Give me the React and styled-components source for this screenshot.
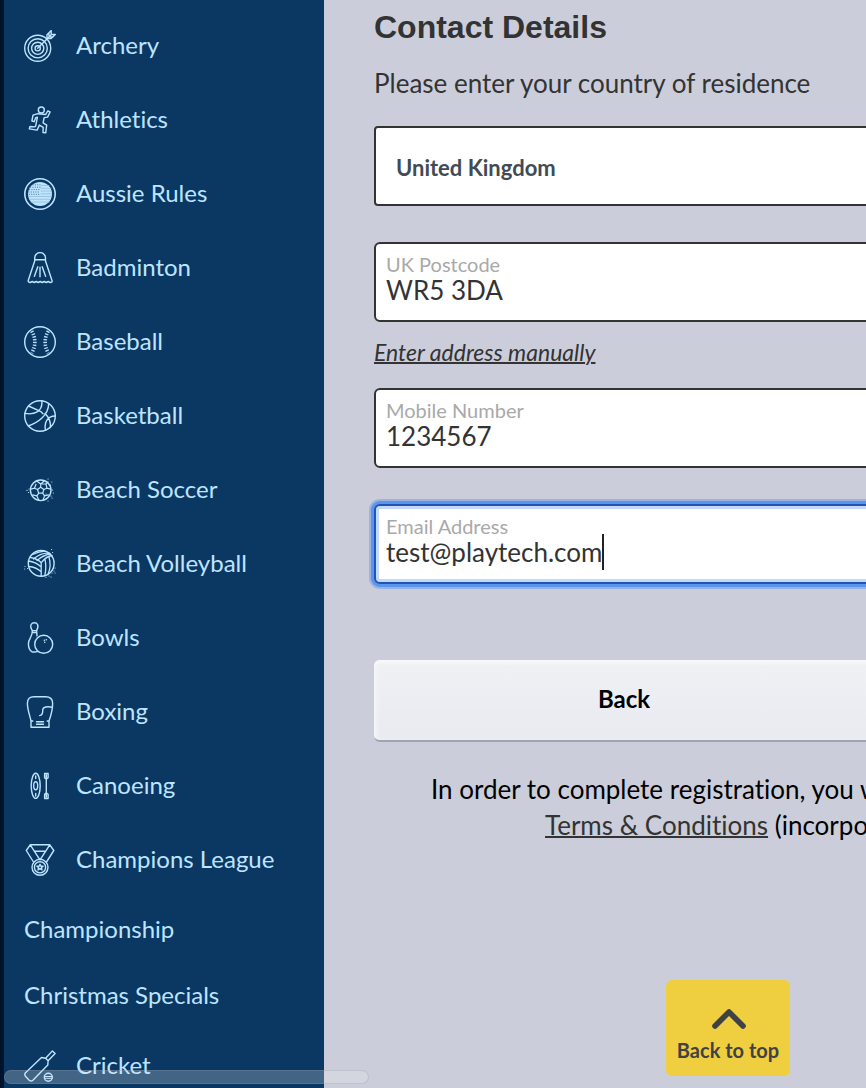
import React from "react";
import styled, { createGlobalStyle, css } from "styled-components";

const GlobalStyle = createGlobalStyle`
  *, *::before, *::after { box-sizing: border-box; }
  body {
    margin: 0;
    background: #cbceda;
    color: #333;
    font-family: Lato, "Liberation Sans", sans-serif;
    font-variant-ligatures: none;
  }
`;

const Page = styled.div`
  display: flex;
  height: 100vh;
  overflow: hidden;
`;

const Sidebar = styled.nav`
  flex: 0 0 324px;
  overflow: hidden;
  border-left: 4px solid #00132d;
  background: #0a3863;
`;

const SportList = styled.ul`
  margin: 0;
  padding: 9px 0 0;
  list-style: none;
`;

const SportLink = styled.a`
  display: flex;
  align-items: center;
  gap: 20px;
  height: ${(p) => (p.$compact ? 66 : 74)}px;
  padding: 0 20px;
  color: #bfe4ff;
  font-size: 24px;
  line-height: 32px;
  text-decoration: none;
  white-space: nowrap;
`;

const SportName = styled.span`
  padding-bottom: 2px;
`;

const IconSvg = styled.svg`
  flex: none;
  width: 32px;
  height: 32px;
  fill: none;
  stroke: currentColor;
  stroke-width: 1.4;
  stroke-linecap: round;
  stroke-linejoin: round;
`;

const Main = styled.main`
  position: relative;
  flex: 1;
  min-width: 0;
  overflow: hidden;
  padding: 8px 0 0 50px;
`;

const Form = styled.form`
  display: flex;
  flex-direction: column;
  min-width: 1008px;
`;

const Heading = styled.h1`
  margin: 0;
  font: bold 32px/38px "Liberation Sans", Arial, sans-serif;
`;

const Intro = styled.label`
  margin: 20px 0 26px;
  font-size: 26px;
  line-height: 34px;
`;

const box = css`
  height: 80px;
  border: 2px solid #333;
  background: #fff;
`;

const CountrySelect = styled.select`
  ${box}
  width: 100%;
  margin-bottom: 36px;
  padding: 4px 20px 0;
  border-radius: 4px;
  appearance: none;
  color: #414b53;
  font: bold 22px/32px Lato, sans-serif;
`;

const Field = styled.div`
  ${box}
  display: flex;
  flex-direction: column;
  padding: 8px 10px 0;
  border-radius: 6px;
  ${(p) =>
    p.$focused &&
    css`
      border-color: #1f56b3;
      box-shadow: 0 0 0 3px #5b93ee, 0 0 0 5px #9bb3e0, inset 0 0 0 3px #c5dafb;
    `}
`;

const FieldLabel = styled.label`
  color: #a9a9a9;
  font-size: 20px;
  line-height: 24px;
`;

const ValueRow = styled.div`
  display: flex;
  align-items: center;
  height: 28px;
`;

const TextInput = styled.input`
  field-sizing: content;
  padding: 0;
  border: 0;
  outline: 0;
  background: none;
  color: #333;
  caret-color: transparent;
  font: 26px/28px Lato, sans-serif;
`;

const Caret = styled.span`
  flex: none;
  width: 2px;
  height: 36px;
  background: #222;
`;

const ManualLink = styled.a`
  align-self: flex-start;
  margin: 15px 0 21px;
  color: #333;
  font-size: 23px;
  font-style: italic;
  line-height: 30px;
  text-decoration-thickness: 2px;
`;

const Gap = styled.div`
  height: 36px;
`;

const Actions = styled.div`
  display: grid;
  grid-template-columns: 1fr 1fr;
  gap: 8px;
  margin: 76px 0 29px;
`;

const BackButton = styled.button`
  height: 82px;
  padding: 0 0 2px;
  border: 0;
  border-bottom: 2px solid #a0a4b0;
  border-radius: 6px;
  background: linear-gradient(#f0f1f5, #e9eaf0);
  box-shadow: inset 0 3px 3px #f8f9fb, inset 3px 0 4px #f3f4f7;
  color: #000;
  font: bold 24px/32px Lato, sans-serif;
`;

const Terms = styled.p`
  margin: 0;
  color: #000;
  font-size: 26px;
  line-height: 36px;
  white-space: nowrap;
`;

const TermsLine = styled.span`
  display: block;
  padding-left: ${(p) => p.$indent}px;
`;

const TermsLink = styled.a`
  color: #333;
  text-decoration-thickness: 2px;
`;

const TopButton = styled.button`
  position: fixed;
  right: 76px;
  bottom: 12px;
  display: flex;
  flex-direction: column;
  align-items: center;
  gap: 8px;
  width: 124px;
  height: 96px;
  padding: 28px 0 0;
  border: 0;
  border-radius: 6px;
  background: #efce3f;
  color: #3f4244;
  font: bold 20px/24px Lato, sans-serif;
  white-space: nowrap;
`;

const Chevron = styled.svg`
  width: 36px;
  height: 22px;
  fill: none;
  stroke: currentColor;
  stroke-width: 5.6;
  stroke-linecap: round;
  stroke-linejoin: round;
`;

const ScrollThumb = styled.div`
  position: fixed;
  bottom: 4px;
  left: 4px;
  width: 365px;
  height: 14px;
  border-radius: 7px;
  background: rgba(236, 236, 238, 0.25);
  box-shadow: inset 0 0 0 1px rgba(140, 150, 165, 0.3);
`;

const icons = {
  archery: (
    <>
      <circle cx="13.7" cy="18.3" r="13" />
      <circle cx="13.7" cy="18.3" r="9.6" />
      <circle cx="13.7" cy="18.3" r="6.1" />
      <circle cx="13.7" cy="18.3" r="2.6" />
      <path d="M13.7 18.3 27.5 4.5M23 8.6V4.7L27.2.6V4.5h4.1l-4.2 4.1ZM25 3v4h4" />
    </>
  ),
  athletics: (
    <>
      <circle cx="17.3" cy="6" r="3" />
      <path d="M14 9.7 9 11.2 7.9 17l2.2.7 1.7-4.1 1.6-.3-1.7 8.5-.8 1.1-4.9-.4-.7 2.4 7.8 1.2 2.3-5 3.8 2.2-.2 5.3 2.7.2 1-7.7-3.6-2.3 1-5.2 3.5-.5 2.5-5.2-2.3-1-2.1 3.6Z" />
    </>
  ),
  aussie: (
    <>
      <circle cx="16" cy="16" r="15.2" strokeWidth="1.6" />
      <circle cx="16" cy="16" r="12" fill="currentColor" stroke="none" />
      <path d="M17 7.5h8M17 10.300h10M17 13h10.500M17 15.800h10.500M4.500 18.500h23M5.500 21.300h21M7 24h18" stroke="#94bbdc" strokeWidth=".8" />
      <path d="M9 6.800h7M6.500 9.200H16M5.500 11.600H16M4.800 14H16M5.300 16.300H16" stroke="#3f6c95" strokeWidth=".9" strokeDasharray=".3 2" />
    </>
  ),
  badminton: (
    <path d="M10.700 9V6a5.400 5.400 0 0 1 10.800 0v3M10.700 7.700h10.800M10.700 9 4.200 28.500q0 2 2 2l2-1 2 1 2-1 2 1 2-1 2 1 2-1 2 1 2-1 2 1q2.400 0 1.800-2L21.500 9M16 15.300v9.500M13.800 14.800l-3.400 9.500M18.200 14.800l3.400 9.500" />
  ),
  baseball: (
    <>
      <circle cx="16" cy="16" r="15.300" />
      <path d="M7.700 5.200Q14 16 7.700 27M24.300 5.200Q18 16 24.300 27" strokeWidth="3.600" strokeLinecap="butt" strokeDasharray="1.300 1.500" />
    </>
  ),
  basketball: (
    <>
      <circle cx="16" cy="16" r="15.300" />
      <path d="m4.500 6 12 5.300 2.500 2.500M.8 13.400C10 15 19 12 17.800.8M4.300 26C13 23 24.500 16 24.700 3.500M21 13.500c4 4 6 9 5.300 14M21.500 30C20 23 23 16 31.200 16" />
    </>
  ),
  beachSoccer: (
    <>
      <circle cx="16.700" cy="16.300" r="10.300" />
      <path d="m16.700 13.200 3.200 2.300-1.200 3.700h-4l-1.200-3.700ZM16.700 13.200V10l-4-3M16.700 10l3.500-3M13.500 15.500l-3-1.300-3.600 1M10.500 14.200l1.500-4M14.700 19.200l-1.800 2.700-4.200-1M12.900 21.900l1.800 4M18.700 19.200l1.800 2.700-1.300 3.800M20.500 21.900l4-1M19.900 15.500l3-1.300 3.700 1M22.900 14.200 22 10l2-2M22 10h-4" strokeWidth="1.200" />
      <path d="M3 16.400h.1M5 15h.1M4.500 18.500h.1M24 5h.1M27.800 8h.1M26.500 11h.1M28.500 16h.1M29.300 19h.1M27 22h.1M24 27h.1M22 20h.1M28 24h.1" strokeWidth="1.100" />
    </>
  ),
  volleyball: (
    <>
      <circle cx="17.200" cy="15.400" r="12.900" />
      <path d="M6.500 9.500c4 .5 7.500 2 10.700 5.200C20 11 23.500 8.200 28 7.500M9.500 11C14 7 18.500 4.500 25.500 5.200M13 12.500C17 9 21 6.500 26.500 6M8.500 6.500C12 5 15.500 3.500 20.500 3M17.200 14.700v13.500M21 11.300c1.200 5.500 1 11-.2 16.300M25 9c1.600 5.500 1.400 11.500-.8 16.500M4.500 13c5 .6 8.900 2.500 12.700 6M5 18.500c4.500.3 8.500 2 12.200 5.200" strokeWidth="1.300" />
      <path d="M1 18.500h.1M.7 21h.1M3.500 20.500h.1M27.500 1.500h.1M28.500 4.500h.1M31 20h.1M30 23h.1M28 25h.1M25 28h.1M22 29.300h.1M27 29h.1M31 25h.1" strokeWidth="1.100" />
    </>
  ),
  bowls: (
    <>
      <path d="M8.300 8.600C4.800 2.800 8 .7 10.400.7s5.300 2.100 2.200 7.900l.4 5.300M8.300 8.600c.4 7-4 7.500-3.900 13.200.1 4.200 1.600 7 3.400 7.900 2 .5 4.300.3 5.600-.1M8.300 8.600h4.300M8.200 10.500h4.600" />
      <circle cx="19.700" cy="22.300" r="9" />
      <path d="M20.300 18.300h.1M22.300 17.700h.1M20.700 20.300h.1" strokeWidth="1.500" />
    </>
  ),
  boxing: (
    <path d="M7 25v6.200h18V25M7 25C6 20 3.500 14 3.400 7.500 3.300 2.500 6 .8 10 .8h11.500c4.300 0 7 2.200 7.100 6.200.2 6-1.800 13-3.600 18M7 25h1.800M23.200 25H25M28.300 11.200c-4.500-.8-9.500-.7-9.500 2.600 0 4-.5 5.800-3.200 5.800M12.500 25.800h7M12.500 28.300h7" />
  ),
  canoeing: (
    <>
      <ellipse cx="11.700" cy="15.800" rx="4.500" ry="12.600" />
      <ellipse cx="11.700" cy="15.800" rx="2" ry="4" />
      <path d="M11.700 6v2.500M11.700 23.500V26M22.300 9v13.700M20.600 3.500h3.500v4.300l-1.800 1.500-1.700-1.500ZM20.600 28.500h3.500v-4.300l-1.800-1.500-1.700 1.500ZM22.300 5v3M22.300 24v3" />
    </>
  ),
  champions: (
    <>
      <path d="M6.200.8h19.600M6.200.8 2.300 6.500 9.500 18M6.200.8 16 15.800 25.800.8l4 5.700L22.500 18M10.500 7.300h11" />
      <circle cx="16" cy="23.300" r="8" />
      <circle cx="16" cy="23.300" r="5.600" />
      <path d="m16 20.300.9 2h2.200l-1.700 1.400.6 2.200-2-1.200-2 1.200.6-2.200-1.700-1.400h2.200Z" />
    </>
  ),
  cricket: (
    <>
      <path d="M17.500 7.500 1.500 22.800Q.3 24.300 1.200 26l4 4.200q2 1.600 3.700.1L23.800 15l.3-4.200-2.500-2.500ZM21.600 8.300l6.800-7.400 2.700 2.600-7 7.300" />
      <circle cx="24.300" cy="27.300" r="4" />
      <path d="M20.500 26.500h7.600M20.700 28.300h7.200" strokeWidth="1" />
    </>
  ),
};

const sports = [
  ["Archery", "archery"],
  ["Athletics", "athletics"],
  ["Aussie Rules", "aussie"],
  ["Badminton", "badminton"],
  ["Baseball", "baseball"],
  ["Basketball", "basketball"],
  ["Beach Soccer", "beachSoccer"],
  ["Beach Volleyball", "volleyball"],
  ["Bowls", "bowls"],
  ["Boxing", "boxing"],
  ["Canoeing", "canoeing"],
  ["Champions League", "champions"],
  ["Championship"],
  ["Christmas Specials"],
  ["Cricket", "cricket"],
];

function LabelledField({ id, label, value, type = "text", focused = false }) {
  return (
    <Field $focused={focused}>
      <FieldLabel htmlFor={id}>{label}</FieldLabel>
      <ValueRow>
        <TextInput id={id} type={type} defaultValue={value} />
        {focused && <Caret />}
      </ValueRow>
    </Field>
  );
}

export default function App() {
  return (
    <>
      <GlobalStyle />
      <Page>
        <Sidebar>
          <SportList>
            {sports.map(([name, icon]) => (
              <li key={name}>
                <SportLink href="#" $compact={!icon}>
                  {icon && (
                    <IconSvg viewBox="0 0 32 32" aria-hidden="true">
                      {icons[icon]}
                    </IconSvg>
                  )}
                  <SportName>{name}</SportName>
                </SportLink>
              </li>
            ))}
          </SportList>
        </Sidebar>
        <Main>
          <Form>
            <Heading>Contact Details</Heading>
            <Intro htmlFor="country">Please enter your country of residence</Intro>
            <CountrySelect id="country" defaultValue="uk">
              <option value="uk">United Kingdom</option>
            </CountrySelect>
            <LabelledField id="postcode" label="UK Postcode" value="WR5 3DA" />
            <ManualLink href="#">Enter address manually</ManualLink>
            <LabelledField id="mobile" label="Mobile Number" value="1234567" type="tel" />
            <Gap />
            <LabelledField id="email" label="Email Address" value="test@playtech.com" type="email" focused />
            <Actions>
              <BackButton type="button">Back</BackButton>
            </Actions>
            <Terms>
              <TermsLine $indent={57}>In order to complete registration, you will</TermsLine>
              <TermsLine $indent={171}>
                <TermsLink href="#">Terms &amp; Conditions</TermsLink> (incorporating
              </TermsLine>
            </Terms>
          </Form>
        </Main>
      </Page>
      <TopButton type="button">
        <Chevron viewBox="0 0 36 22" aria-hidden="true">
          <path d="M5 18 19 4l14 14" />
        </Chevron>
        Back to top
      </TopButton>
      <ScrollThumb />
    </>
  );
}
